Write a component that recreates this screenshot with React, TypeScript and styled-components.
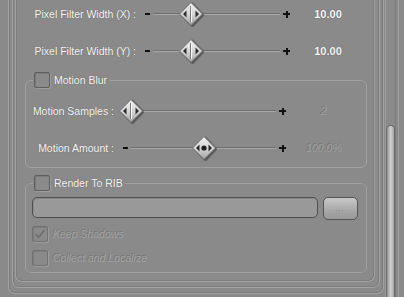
import React from 'react'
import styled, { createGlobalStyle } from 'styled-components'

const GlobalStyle = createGlobalStyle`
  html, body {
    margin: 0;
    padding: 0;
    background: #8a8a8a;
  }
  body {
    font-family: 'Liberation Sans', Arial, sans-serif;
  }
`

const Screen = styled.div`
  width: 404px;
  height: 297px;
  overflow: hidden;
  display: flex;
  background: #8a8a8a;
`

const Content = styled.div`
  width: 384px;
  display: flex;
  flex-direction: column;
`

const Frame = styled.div<{ $ml: number; $mr: number; $pb: number }>`
  margin-left: ${({ $ml }) => $ml}px;
  margin-right: ${({ $mr }) => $mr}px;
  padding-bottom: ${({ $pb }) => $pb}px;
  border: 1px solid #a2a2a2;
  border-top: none;
  border-radius: 0 0 7px 7px;
  box-shadow: inset 1px 0 0 #7c7c7c, inset -1px 0 0 #7c7c7c, inset 0 -1px 0 #7c7c7c;
  display: flex;
  flex-direction: column;
`

const Body = styled.div`
  display: flex;
  flex-direction: column;
  padding: 1px 7px 8px 9px;
`

const Row = styled.div<{ $mt?: number; $pl?: number }>`
  display: flex;
  align-items: center;
  height: 26px;
  margin-top: ${({ $mt }) => $mt ?? 0}px;
  padding-left: ${({ $pl }) => $pl ?? 0}px;
`

const Label = styled.div<{ $w: number }>`
  width: ${({ $w }) => $w}px;
  flex: none;
  text-align: right;
  font-size: 10.5px;
  color: #f6f6f6;
  text-shadow: 0 0 1px rgba(60, 60, 60, 0.6);
  white-space: nowrap;
`

const Minus = styled.span<{ $hidden?: boolean }>`
  width: 12px;
  margin-left: 5px;
  flex: none;
  display: flex;
  justify-content: center;
  &::before {
    content: '';
    display: ${({ $hidden }) => ($hidden ? 'none' : 'block')};
    width: 5px;
    height: 2px;
    background: #111;
  }
`

const Plus = styled.span`
  width: 12px;
  height: 7px;
  flex: none;
  position: relative;
  &::before,
  &::after {
    content: '';
    position: absolute;
    background: #111;
  }
  &::before {
    left: 3px;
    top: 2.5px;
    width: 7px;
    height: 2px;
  }
  &::after {
    left: 5.5px;
    top: 0;
    width: 2px;
    height: 7px;
  }
`

const Track = styled.div<{ $w: number }>`
  width: ${({ $w }) => $w}px;
  height: 26px;
  flex: none;
  position: relative;
  display: flex;
  align-items: center;
  &::before {
    content: '';
    display: block;
    width: 100%;
    height: 1px;
    background: #a8a8a8;
    border-top: 1px solid #6e6e6e;
  }
`

const ThumbBox = styled.div`
  position: absolute;
  top: 0;
  width: 26px;
  height: 26px;
  margin-left: -13px;
`

const Value = styled.div<{ $disabled?: boolean }>`
  width: 46px;
  margin-left: 13px;
  flex: none;
  text-align: center;
  font-size: ${({ $disabled }) => ($disabled ? '10.5px' : '11px')};
  font-weight: ${({ $disabled }) => ($disabled ? 400 : 700)};
  font-style: ${({ $disabled }) => ($disabled ? 'italic' : 'normal')};
  color: ${({ $disabled }) => ($disabled ? '#a0a0a0' : '#f6f6f6')};
  text-shadow: ${({ $disabled }) =>
    $disabled ? '-1px -1px 0 #777777' : '0 0 1px rgba(60,60,60,0.7)'};
`

const Group = styled.fieldset<{ $mt: number; $pb: number }>`
  margin: ${({ $mt }) => $mt}px 0 0 0;
  padding: 0 8px ${({ $pb }) => $pb}px 6px;
  border: 1px solid #a0a0a0;
  border-radius: 6px;
  display: flex;
  flex-direction: column;
  min-width: 0;
`

const Legend = styled.legend`
  padding: 0 2px 0 1px;
  margin-left: 1px;
  display: flex;
  align-items: center;
  gap: 4px;
  height: 16px;
`

const Check = styled.span<{ $disabled?: boolean }>`
  width: 14px;
  height: 14px;
  flex: none;
  border: 1px solid ${({ $disabled }) => ($disabled ? '#727272' : '#5e5e5e')};
  border-radius: 2px;
  box-shadow: inset 1px 1px 0 #7b7b7b, 1px 1px 0 #9c9c9c;
  display: flex;
  align-items: center;
  justify-content: center;
`

const CheckText = styled.span<{ $disabled?: boolean }>`
  font-size: 10.5px;
  white-space: nowrap;
  color: ${({ $disabled }) => ($disabled ? '#a2a2a2' : '#f6f6f6')};
  font-style: ${({ $disabled }) => ($disabled ? 'italic' : 'normal')};
  text-shadow: ${({ $disabled }) =>
    $disabled ? '-1px -1px 0 #777777' : '0 0 1px rgba(60,60,60,0.6)'};
`

const OptionRow = styled.div<{ $mt: number }>`
  display: flex;
  align-items: center;
  gap: 5px;
  margin-top: ${({ $mt }) => $mt}px;
  height: 16px;
`

const PathRow = styled.div`
  display: flex;
  gap: 5px;
  margin-top: 6px;
  height: 21px;
`

const PathField = styled.div`
  flex: 1;
  box-sizing: border-box;
  height: 21px;
  border: 1px solid #4f4f4f;
  border-radius: 5px;
  background: #999999;
  box-shadow: inset 1px 1px 0 #8a8a8a;
`

const BrowseButton = styled.div`
  width: 35px;
  height: 23px;
  box-sizing: border-box;
  border: 1px solid #545454;
  border-radius: 5px;
  background: linear-gradient(#c9c9c9, #a2a2a2 70%, #9a9a9a);
  display: flex;
  align-items: center;
  justify-content: center;
  font-size: 10px;
  color: #a7a7a7;
  text-shadow: -1px -1px 0 #8c8c8c;
`

const ScrollColumn = styled.div`
  width: 20px;
  display: flex;
`

const ScrollTrack = styled.div`
  width: 10px;
  margin-left: 1px;
  border-left: 1px solid #9d9d9d;
  border-right: 1px solid #7a7a7a;
  display: flex;
  flex-direction: column;
`

const ScrollThumb = styled.div`
  margin-top: 125px;
  flex: 1;
  border-radius: 5px 5px 0 0;
  border: 1px solid #6c6c6c;
  border-bottom: none;
  background: linear-gradient(90deg, #8e8e8e, #c4c4c4 40%, #d0d0d0 55%, #a3a3a3);
`

const ScrollEdge = styled.div`
  width: 6px;
  margin-left: 2px;
  border-left: 1px solid #a0a0a0;
`

const Thumb = ({ pos, dot }: { pos: number; dot?: boolean }) => (
  <ThumbBox style={{ left: `${pos}%` }}>
    <svg width='26' height='26' viewBox='0 0 26 26'>
      <defs>
        <linearGradient id='thumbFill' x1='0' y1='0' x2='0' y2='1'>
          <stop offset='0' stopColor='#f2f2f2' />
          <stop offset='0.55' stopColor='#d2d2d2' />
          <stop offset='1' stopColor='#9e9e9e' />
        </linearGradient>
      </defs>
      <polygon
        points='14.5,2.5 25.5,14 14.5,25.5 3.5,14'
        fill='rgba(40,40,40,0.35)'
        stroke='rgba(40,40,40,0.35)'
        strokeWidth='2'
        strokeLinejoin='round'
      />
      <polygon
        points='13,1.5 24.5,13 13,24.5 1.5,13'
        fill='url(#thumbFill)'
        stroke='#6a6a6a'
        strokeWidth='1'
        strokeLinejoin='round'
      />
      <polygon points='5,13 8.5,9.5 8.5,16.5' fill='#2c2c2c' />
      <polygon points='21,13 17.5,9.5 17.5,16.5' fill='#2c2c2c' />
      {dot ? (
        <circle cx='13' cy='13' r='2.6' fill='#1e1e1e' />
      ) : (
        <>
          <line x1='12.5' y1='5' x2='12.5' y2='21' stroke='#7a7a7a' strokeWidth='1' />
          <line x1='13.5' y1='5' x2='13.5' y2='21' stroke='#f4f4f4' strokeWidth='1' />
        </>
      )}
    </svg>
  </ThumbBox>
)

const CheckMark = () => (
  <svg width='12' height='12' viewBox='0 0 12 12'>
    <polyline
      points='1.5,6 4.5,9.5 10.5,2'
      fill='none'
      stroke='#6c6c6c'
      strokeWidth='1.6'
    />
  </svg>
)

type SliderProps = {
  label: string
  labelWidth: number
  trackWidth: number
  pos: number
  value: string
  hideMinus?: boolean
  dot?: boolean
  disabled?: boolean
  mt?: number
  pl?: number
}

const SliderRow = ({ label, labelWidth, trackWidth, pos, value, hideMinus, dot, disabled, mt, pl }: SliderProps) => (
  <Row $mt={mt} $pl={pl}>
    <Label $w={labelWidth}>{label}</Label>
    <Minus $hidden={hideMinus} />
    <Track $w={trackWidth}>
      <Thumb pos={pos} dot={dot} />
    </Track>
    <Plus />
    <Value $disabled={disabled}>{value}</Value>
  </Row>
)

export default function App() {
  return (
    <>
      <GlobalStyle />
      <Screen>
        <Content>
          <Frame $ml={8} $mr={0} $pb={5}>
            <Frame $ml={3} $mr={3} $pb={5}>
              <Frame $ml={2} $mr={4} $pb={0}>
                <Body>
                  <SliderRow
                    label='Pixel Filter Width (X) :'
                    labelWidth={111}
                    trackWidth={127}
                    pos={30}
                    value='10.00'
                    pl={-1}
                  />
                  <SliderRow
                    label='Pixel Filter Width (Y) :'
                    labelWidth={111}
                    trackWidth={127}
                    pos={30}
                    value='10.00'
                    mt={11}
                    pl={-1}
                  />
                  <Group $mt={8} $pb={6}>
                    <Legend>
                      <Check />
                      <CheckText>Motion Blur</CheckText>
                    </Legend>
                    <SliderRow
                      label='Motion Samples :'
                      labelWidth={82}
                      trackWidth={145}
                      pos={0}
                      value='2'
                      hideMinus
                      disabled
                      mt={10}
                    />
                    <SliderRow
                      label='Motion Amount :'
                      labelWidth={82}
                      trackWidth={145}
                      pos={50}
                      value='100.0%'
                      dot
                      disabled
                      mt={11}
                    />
                  </Group>
                  <Group $mt={7} $pb={6}>
                    <Legend>
                      <Check />
                      <CheckText>Render To RIB</CheckText>
                    </Legend>
                    <PathRow>
                      <PathField />
                      <BrowseButton>...</BrowseButton>
                    </PathRow>
                    <OptionRow $mt={8}>
                      <Check $disabled>
                        <CheckMark />
                      </Check>
                      <CheckText $disabled>Keep Shadows</CheckText>
                    </OptionRow>
                    <OptionRow $mt={8}>
                      <Check $disabled />
                      <CheckText $disabled>Collect and Localize</CheckText>
                    </OptionRow>
                  </Group>
                </Body>
              </Frame>
            </Frame>
          </Frame>
        </Content>
        <ScrollColumn>
          <ScrollTrack>
            <ScrollThumb />
          </ScrollTrack>
          <ScrollEdge />
        </ScrollColumn>
      </Screen>
    </>
  )
}
